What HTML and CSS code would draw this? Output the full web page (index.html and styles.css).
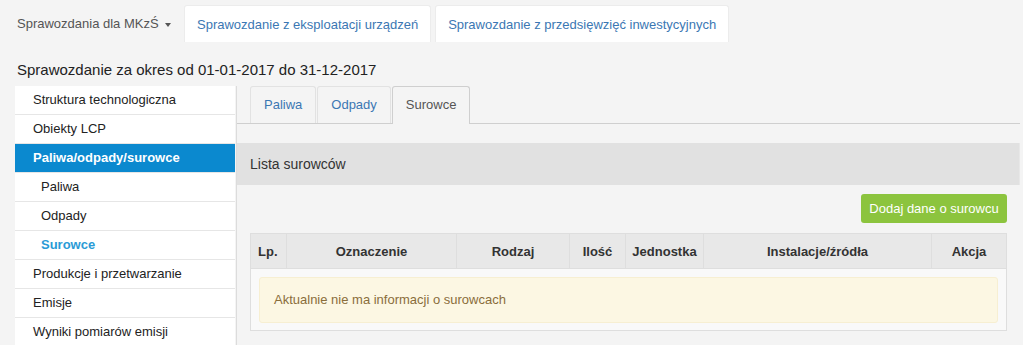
FILE: index.html
```html
<!DOCTYPE html>
<html lang="pl">
<head>
  <meta charset="UTF-8" />
  <title>Sprawozdanie</title>
  <link rel="stylesheet" href="styles.css">
</head>
<body>
  <div class="topnav">
    <div class="dropdown">Sprawozdania dla MKzŚ <span class="caret"></span></div>
    <a class="toptab toptab-first">Sprawozdanie z eksploatacji urządzeń</a>
    <a class="toptab">Sprawozdanie z przedsięwzięć inwestycyjnych</a>
  </div>

  <h1 class="title">Sprawozdanie za okres od 01-01-2017 do 31-12-2017</h1>

  <div class="layout">
    <ul class="sidebar">
      <li>Struktura technologiczna</li>
      <li>Obiekty LCP</li>
      <li class="active">Paliwa/odpady/surowce</li>
      <li class="sub">Paliwa</li>
      <li class="sub">Odpady</li>
      <li class="sub current">Surowce</li>
      <li>Produkcje i przetwarzanie</li>
      <li>Emisje</li>
      <li>Wyniki pomiarów emisji</li>
    </ul>

    <div class="content">
      <div class="tabs">
        <a class="tab">Paliwa</a>
        <a class="tab">Odpady</a>
        <a class="tab selected">Surowce</a>
      </div>

      <div class="panel-head">Lista surowców</div>

      <div class="panel-body">
        <div class="actions">
          <button class="btn-add">Dodaj dane o surowcu</button>
        </div>
        <table class="grid">
          <thead>
            <tr>
              <th class="col-lp">Lp.</th>
              <th class="col-ozn">Oznaczenie</th>
              <th class="col-rodz">Rodzaj</th>
              <th class="col-ilosc">Ilość</th>
              <th class="col-jedn">Jednostka</th>
              <th class="col-inst">Instalacje/źródła</th>
              <th class="col-akcja">Akcja</th>
            </tr>
          </thead>
          <tbody>
            <tr>
              <td colspan="7">
                <div class="alert">Aktualnie nie ma informacji o surowcach</div>
              </td>
            </tr>
          </tbody>
        </table>
      </div>
    </div>
  </div>
</body>
</html>
```

FILE: styles.css
```css
body {
  margin: 0;
  background: #f4f4f4;
  font-family: "Liberation Sans", Arial, sans-serif;
  font-size: 13px;
  color: #333;
  overflow: hidden;
}

/* top navigation */
.topnav {
  display: flex;
  padding-top: 5px;
  height: 37px;
}
.dropdown {
  width: 183px;
  box-sizing: border-box;
  padding-left: 17px;
  line-height: 37px;
  color: #555;
}
.caret {
  display: inline-block;
  width: 0;
  height: 0;
  margin-left: 3px;
  vertical-align: middle;
  border-top: 4px solid #555;
  border-left: 3.5px solid transparent;
  border-right: 3.5px solid transparent;
}
.toptab {
  display: block;
  margin-left: 1px;
  padding: 0 12px;
  line-height: 37px;
  white-space: nowrap;
  background: #fff;
  border: 1px solid #ececec;
  border-bottom: none;
  border-radius: 3px 3px 0 0;
  color: #3b77b3;
}
.toptab-first {
  margin-right: 3px;
}

.title {
  margin: 0;
  padding: 18px 17px 6px;
  font-size: 15px;
  font-weight: normal;
  line-height: 20px;
  color: #222;
}

/* layout */
.layout {
  display: flex;
  align-items: flex-start;
}
.sidebar {
  list-style: none;
  margin: 0 0 0 15px;
  padding: 0;
  width: 220px;
  flex: none;
}
.sidebar li {
  height: 28px;
  line-height: 28px;
  padding-left: 18px;
  background: #fff;
  border-bottom: 1px solid #e6e6e6;
  color: #222;
  white-space: nowrap;
}
.sidebar li.sub {
  padding-left: 26px;
}
.sidebar li.active {
  background: #0b89cf;
  color: #fff;
  font-weight: bold;
}
.sidebar li.current {
  color: #2a9bd6;
  font-weight: bold;
}

.content {
  flex: 1;
  min-width: 0;
  margin: 0 3px 0 1px;
  border-left: 1px solid #dcdcdc;
  min-height: 260px;
}

/* inner tabs */
.tabs {
  display: flex;
  gap: 1px;
  padding-left: 13px;
  height: 37px;
  border-bottom: 1px solid #cfcfcf;
}
.tab {
  display: block;
  padding: 0 13px;
  line-height: 36px;
  border: 1px solid #e2e2e2;
  border-bottom: none;
  border-radius: 3px 3px 0 0;
  color: #3b77b3;
}
.tab.selected {
  border-color: #cfcfcf;
  background: #f4f4f4;
  color: #555;
  height: 37px;
}

.panel-head {
  margin-top: 19px;
  height: 42px;
  line-height: 42px;
  padding-left: 13px;
  background: #e1e1e1;
  border-right: 1px solid #e8e8e8;
  font-size: 14px;
  color: #333;
}

.panel-body {
  padding: 0 13px;
}
.actions {
  display: flex;
  justify-content: flex-end;
  padding-top: 9px;
}
.btn-add {
  width: 146px;
  height: 29px;
  border: none;
  border-radius: 3px;
  background: #8cc43e;
  color: #fff;
  font-family: inherit;
  font-size: 13px;
  padding: 0;
}

/* table */
.grid {
  width: 100%;
  margin-top: 10px;
  border-collapse: collapse;
  table-layout: fixed;
  border: 1px solid #dedede;
}
.grid th {
  height: 34px;
  background: #e8e8e8;
  border: 1px solid #dedede;
  font-weight: bold;
  font-size: 13px;
  color: #333;
  text-align: center;
  padding: 0;
}
.grid th.col-lp {
  text-align: left;
  padding-left: 7px;
}
.col-lp { width: 28px; }
.col-ozn { width: 169px; }
.col-rodz { width: 112px; }
.col-ilosc { width: 55px; }
.col-jedn { width: 77px; }
.col-inst { width: 227px; }
.grid td {
  background: #f9f9f9;
  padding: 8px 8px 7px;
}
.alert {
  height: 44px;
  line-height: 44px;
  padding-left: 14px;
  background: #fcf7e3;
  border: 1px solid #f7efd2;
  border-radius: 3px;
  color: #8a6d3b;
}
```
